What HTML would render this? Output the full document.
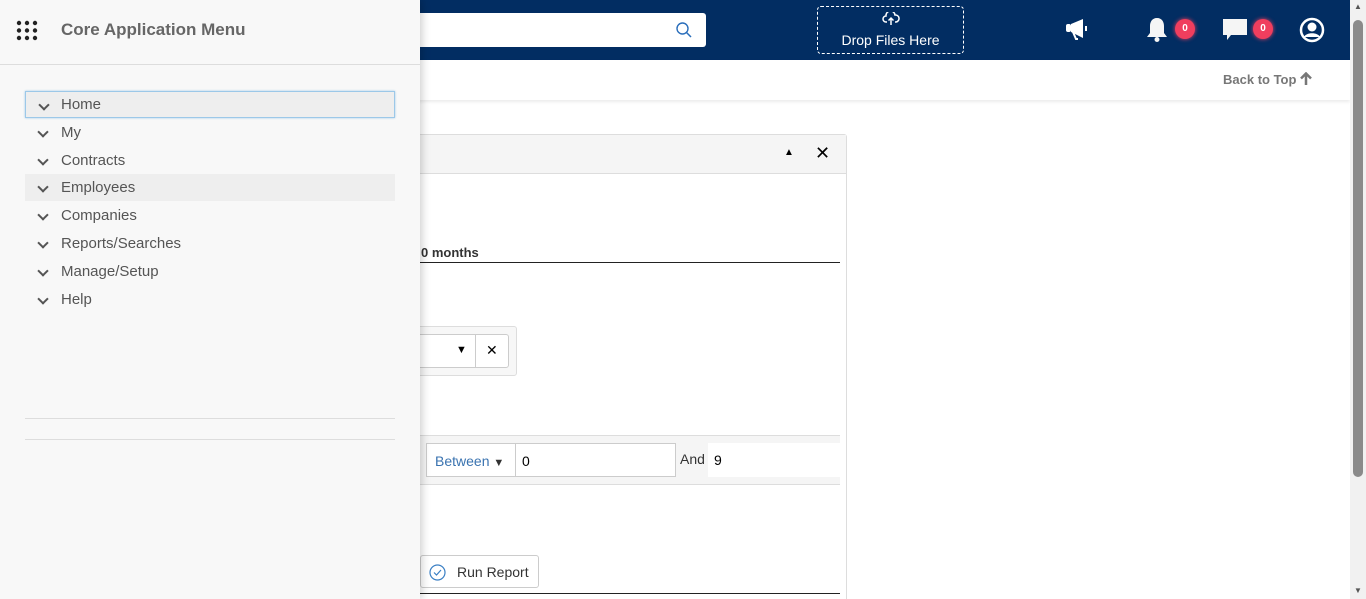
<!DOCTYPE html>
<html><head><style>
*{box-sizing:border-box;margin:0;padding:0}
html,body{width:1366px;height:599px;overflow:hidden}
body{background:#fff;font-family:"Liberation Sans",sans-serif;position:relative}
.hdr{position:absolute;left:0;top:0;width:1350px;height:60px;background:#022d62}
.search{position:absolute;left:400px;top:13px;width:306px;height:34px;background:#fff;border-radius:3px}
.drop{position:absolute;left:817px;top:6px;width:147px;height:48px;border:1px dashed #fff;border-radius:4px;color:#fff;font-size:14px;text-align:center;padding-top:25px}
.badge{position:absolute;width:20px;height:20px;border-radius:10px;background:#f03e5e;color:#fff;font-size:10px;font-weight:bold;text-align:center;line-height:20px;box-shadow:0 0 4px #f03e5e}
.sub{position:absolute;left:0;top:60px;width:1350px;height:40px;background:#fff;box-shadow:0 2px 3px rgba(0,0,0,.08)}
.btt{position:absolute;left:1223px;top:72px;font-size:13px;font-weight:bold;color:#777}
.panel{position:absolute;left:380px;top:134px;width:467px;height:470px;border:1px solid #ddd;border-radius:3px;background:#fff}
.ph{height:39px;background:#f5f5f5;border-bottom:1px solid #ddd}
.side{position:absolute;left:0;top:0;width:420px;height:599px;background:#f8f8f8;box-shadow:2px 0 8px rgba(0,0,0,.2)}
.side .t{position:absolute;left:61px;top:20px;font-size:17px;font-weight:bold;color:#666}
.item{position:absolute;left:25px;width:370px;height:27px;font-size:15px;color:#555;padding-left:36px;line-height:27px}
.item:before{content:"";position:absolute;left:14px;top:9px;width:6px;height:6px;border-right:2px solid #555;border-bottom:2px solid #555;transform:rotate(45deg)}
.scroll{position:absolute;left:1350px;top:0;width:16px;height:599px;background:#f1f1f1}
</style></head><body>
<div class="hdr">
<div class="search"><svg style="position:absolute;left:276px;top:9px" width="16" height="16" viewBox="0 0 16 16"><circle cx="6.5" cy="6.5" r="5.5" fill="none" stroke="#2a6ebb" stroke-width="1.4"/><path d="M10.5 10.5L15 15" stroke="#2a6ebb" stroke-width="1.5"/></svg></div>
<div class="drop">Drop Files Here<svg style="position:absolute;left:64px;top:5px" width="18" height="14" viewBox="0 0 18 14"><path d="M5 10H4a3 3 0 0 1 0-6 4.5 4.5 0 0 1 9-1 3.5 3.5 0 0 1 1 7h-1" fill="none" stroke="#fff" stroke-width="1.5"/><path d="M9 13V6M6.5 8.5L9 6l2.5 2.5" fill="none" stroke="#fff" stroke-width="1.5"/></svg></div>
<svg style="position:absolute;left:1065px;top:17px" width="28" height="24" viewBox="0 0 28 24"><rect x="1" y="7" width="5" height="8" rx="2" fill="#fff"/><path d="M6 7L18 2v19L6 15z" fill="#fff"/><path d="M8 15l3 7h2" stroke="#fff" stroke-width="2" fill="none"/><path d="M21 9v5" stroke="#fff" stroke-width="2"/></svg>
<svg style="position:absolute;left:1145px;top:16px" width="24" height="27" viewBox="0 0 24 27"><path d="M12 2c-5 0-7 4-7 8v7l-3 4h20l-3-4v-7c0-4-2-8-7-8z" fill="#f5f5f5"/><circle cx="12" cy="23.5" r="2.5" fill="#f5f5f5"/></svg>
<div class="badge" style="left:1175px;top:19px">0</div>
<svg style="position:absolute;left:1222px;top:18px" width="26" height="24" viewBox="0 0 26 24"><path d="M1 1h24v16H9l-4 5v-5H1z" fill="#f5f5f5"/></svg>
<div class="badge" style="left:1253px;top:19px">0</div>
<svg style="position:absolute;left:1299px;top:17px" width="26" height="26" viewBox="0 0 26 26"><circle cx="13" cy="13" r="11" fill="none" stroke="#fff" stroke-width="2.5"/><circle cx="13" cy="10" r="4.5" fill="#fff"/><path d="M5 20c2-5 14-5 16 0" fill="#fff"/></svg>
</div>
<div class="sub"></div>
<div class="btt">Back to Top <svg width="12" height="13" viewBox="0 0 12 13" style="vertical-align:-1px"><path d="M6 13V2M1 6.5L6 1.5l5 5" fill="none" stroke="#777" stroke-width="2.5"/></svg></div>
<div class="panel">
<div class="ph"><span style="position:absolute;left:403px;top:12px;font-size:10px">▲</span><span style="position:absolute;left:434px;top:8px;font-size:18px">✕</span></div>
<div style="position:absolute;left:40px;top:110px;font-size:13px;font-weight:bold;color:#333">0 months</div>
<div style="position:absolute;left:0;top:127px;width:459px;border-top:1px solid #222"></div>
<div style="position:absolute;left:0;top:191px;width:136px;height:50px;border:1px solid #ddd;border-radius:3px;background:#f7f7f7"></div>
<div style="position:absolute;left:0;top:199px;width:128px;height:34px;border:1px solid #ccc;border-radius:3px;background:#fff"><span style="position:absolute;left:74px;top:9px;font-size:11px">▼</span><div style="position:absolute;left:93px;top:0;height:32px;border-left:1px solid #ccc"></div><span style="position:absolute;left:104px;top:7px;font-size:14px">✕</span></div>
<div style="position:absolute;left:0;top:300px;width:459px;height:50px;border-top:1px solid #ddd;border-bottom:1px solid #ddd;background:#f5f5f5"></div>
<div style="position:absolute;left:45px;top:308px;width:90px;height:34px;border:1px solid #ccc;background:#fff;color:#3a73b0;font-size:14px;padding:9px 8px">Between <span style="font-size:11px;color:#333">▼</span></div>
<div style="position:absolute;left:134px;top:308px;width:161px;height:34px;border:1px solid #ccc;background:#fff;font-size:14px;padding:9px 6px">0</div>
<div style="position:absolute;left:299px;top:316px;font-size:14px;color:#333">And</div>
<div style="position:absolute;left:327px;top:308px;width:132px;height:34px;background:#fff;font-size:14px;padding:9px 6px">9</div>
<div style="position:absolute;left:39px;top:420px;width:119px;height:33px;border:1px solid #ccc;border-radius:3px;background:#fff;font-size:14px;color:#333;padding:8px 0 0 36px">Run Report<svg style="position:absolute;left:8px;top:8px" width="17" height="17" viewBox="0 0 17 17"><circle cx="8.5" cy="8.5" r="7.5" fill="none" stroke="#3a7fc4" stroke-width="1.2"/><path d="M5 8.5l2.5 2.5 4.5-5" fill="none" stroke="#3a7fc4" stroke-width="1.2"/></svg></div>
<div style="position:absolute;left:0;top:458px;width:459px;border-top:1px solid #222"></div>
</div>
<div class="side">
<svg style="position:absolute;left:16px;top:20px" width="22" height="21" viewBox="0 0 22 21"><g fill="#222"><circle cx="3" cy="3" r="2.2"/><circle cx="11" cy="3" r="2.2"/><circle cx="19" cy="3" r="2.2"/><circle cx="3" cy="10.5" r="2.2"/><circle cx="11" cy="10.5" r="2.2"/><circle cx="19" cy="10.5" r="2.2"/><circle cx="3" cy="18" r="2.2"/><circle cx="11" cy="18" r="2.2"/><circle cx="19" cy="18" r="2.2"/></g></svg>
<div class="t">Core Application Menu</div>
<div style="position:absolute;left:0;top:64px;width:420px;border-top:1px solid #ddd"></div>
<div class="item" style="top:91px;background:#eee;border:1px solid #9cc8e8;box-shadow:0 0 2px #9cc8e8;line-height:25px;padding-left:35px">Home</div>
<div class="item" style="top:119px">My</div>
<div class="item" style="top:147px">Contracts</div>
<div class="item" style="top:174px;background:#eee">Employees</div>
<div class="item" style="top:202px">Companies</div>
<div class="item" style="top:230px">Reports/Searches</div>
<div class="item" style="top:258px">Manage/Setup</div>
<div class="item" style="top:286px">Help</div>
<div style="position:absolute;left:25px;top:418px;width:370px;border-top:1px solid #ddd"></div>
<div style="position:absolute;left:25px;top:439px;width:370px;border-top:1px solid #ddd"></div>
</div>
<div class="scroll"><div style="position:absolute;left:3px;top:20px;width:10px;height:457px;background:#8a8a8a;border-radius:5px"></div><span style="position:absolute;left:4px;top:2px;font-size:8px;color:#555">▲</span><span style="position:absolute;left:4px;top:586px;font-size:8px;color:#555">▼</span></div>
</body></html>
